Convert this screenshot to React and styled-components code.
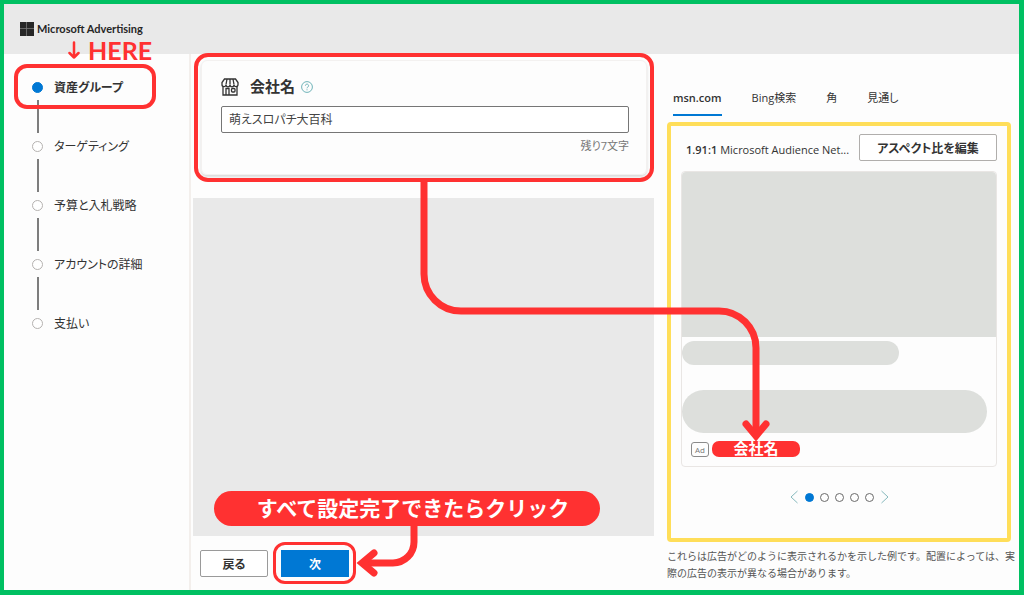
import React, { useState } from "react"
import styled, { createGlobalStyle } from "styled-components"

const red = "#ff3131"
const blue = "#0078d4"

const GlobalStyle = createGlobalStyle`
  *, *::before, *::after {
    box-sizing: border-box;
  }
  body {
    margin: 0;
    background: #fdfdfd;
    color: #333;
    font-family: "Open Sans", "Noto Sans CJK JP", sans-serif;
    font-size: 12px;
    font-feature-settings: "palt";
  }
  button, input {
    font: inherit;
    font-feature-settings: inherit;
    color: inherit;
  }
`

const Frame = styled.div`
  display: flex;
  flex-direction: column;
  min-height: 100vh;
  border: 4px solid #00c062;
  border-right-width: 5px;
  border-bottom-width: 5px;
`

const Header = styled.header`
  display: flex;
  align-items: center;
  gap: 3px;
  height: 50px;
  padding: 0 16px;
  background: #e9e9e9;
`

const Brand = styled.span`
  font-family: Lato, sans-serif;
  font-weight: 700;
  font-size: 11px;
  line-height: 16px;
  color: #262626;
`

const Columns = styled.div`
  flex: 1;
  display: grid;
  grid-template-columns: 187px minmax(0, 463fr) minmax(0, 365fr);
`

const Sidebar = styled.nav`
  position: relative;
  border-right: 2px solid #f3efec;
`

const Here = styled.div`
  position: absolute;
  top: -16px;
  left: 64px;
  display: flex;
  align-items: center;
  gap: 8px;
  color: ${red};
  font-family: Lato, sans-serif;
  font-weight: 700;
  font-size: 25px;
  line-height: 24px;
`

const Steps = styled.ol`
  list-style: none;
  margin: 0;
  padding: 27px 0 0 28px;
`

const Step = styled.li`
  position: relative;
  height: 59px;
  &:not(:last-child)::after {
    content: "";
    display: block;
    width: 2px;
    height: 33px;
    margin: 7px 0 0 5px;
    background: #7d7d7d;
  }
`

const StepLink = styled.a`
  display: flex;
  align-items: center;
  gap: 11px;
  height: 12px;
  color: #333;
  font-weight: ${p => (p.$active ? 700 : 400)};
  text-decoration: none;
  white-space: nowrap;
  &::before {
    content: "";
    width: 11px;
    height: 11px;
    border-radius: 50%;
    border: 1px solid ${p => (p.$active ? blue : "#b5b2b0")};
    background: ${p => (p.$active ? blue : "#fff")};
  }
`

const Highlight = styled.span`
  position: absolute;
  inset: ${p => p.$inset};
  border: ${p => p.$width || 4}px solid ${red};
  border-radius: ${p => p.$radius}px;
  pointer-events: none;
`

const Main = styled.main`
  display: flex;
  flex-direction: column;
`

const NameCard = styled.section`
  position: relative;
  margin: 6px 7px 23px 10px;
  padding: 16px 17px 18px 19px;
  border: 1px solid #f3f1f0;
  border-radius: 6px;
  box-shadow: 0 2px 3px rgba(0, 0, 0, 0.14);
`

const NameTitle = styled.div`
  display: flex;
  align-items: center;
  height: 20px;
  margin-bottom: 9px;
  label {
    margin: 0 6px 0 11px;
    padding-bottom: 4px;
    font-weight: 700;
    font-size: 15px;
  }
`

const NameInput = styled.input`
  display: block;
  width: 100%;
  height: 27px;
  padding: 0 7px 2px;
  border: 1px solid #767676;
  border-radius: 2px;
  background: #fff;
  color: #444;
`

const Remaining = styled.div`
  margin-top: 4px;
  margin-bottom: 1px;
  text-align: right;
  font-size: 11px;
  line-height: 18px;
  color: #777;
`

const HelpButton = styled.button`
  display: flex;
  padding: 0;
  border: 0;
  background: none;
`

const Connector = styled.svg`
  position: absolute;
  left: 50%;
  top: 100%;
  margin: 7px 0 0 -4px;
  overflow: visible;
  pointer-events: none;
  z-index: 2;
  fill: none;
  stroke: ${red};
  stroke-width: 7;
`

const Blank = styled.div`
  flex: 1;
  display: flex;
  align-items: flex-end;
  min-height: 200px;
  margin-left: 2px;
  padding: 0 54px 10px 21px;
  background: #e9e9e9;
`

const ClickNote = styled.div`
  flex: 1;
  height: 35px;
  padding-left: 12px;
  border-radius: 18px;
  background: ${red};
  color: #fff;
  font-family: "Noto Sans CJK JP", sans-serif;
  font-feature-settings: normal;
  font-weight: 700;
  font-size: 21px;
  line-height: 33px;
  text-align: center;
  white-space: nowrap;
`

const Footer = styled.footer`
  position: relative;
  display: flex;
  gap: 13px;
  padding: 14px 9px 13px;
`

const ButtonSlot = styled.div`
  position: relative;
`

const FooterButton = styled.button`
  display: block;
  width: 68px;
  height: 27px;
  padding: 0;
  border: 1px solid ${p => (p.$primary ? blue : "#9a9a9a")};
  border-radius: ${p => (p.$primary ? 0 : 2)}px;
  background: ${p => (p.$primary ? blue : "#fff")};
  color: ${p => (p.$primary ? "#fff" : "#333")};
  font-weight: 700;
`

const ClickArrow = styled(Connector)`
  left: 100%;
  top: 0;
  margin: -24px 0 0 8px;
`

const Preview = styled.aside`
  padding: 32px 1px 0 13px;
`

const Tabs = styled.div`
  display: flex;
  gap: 30px;
  margin: 0 0 6px 6px;
`

const Tab = styled.button`
  height: 30px;
  padding: 0 0 6px;
  border: 0;
  border-bottom: 2px solid ${p => (p.$active ? blue : "transparent")};
  background: none;
  font-size: 11px;
  font-weight: ${p => (p.$active ? 600 : 400)};
`

const PreviewBox = styled.section`
  height: 420px;
  margin-right: 7px;
  padding: 8px 10px;
  border: 4px solid #ffde59;
  border-radius: 4px;
`

const RatioRow = styled.div`
  display: flex;
  align-items: center;
  gap: 3px;
  margin-bottom: 10px;
  padding-left: 5px;
  font-size: 11px;
  white-space: nowrap;
  b {
    font-weight: 600;
  }
  b, span {
    padding-top: 4px;
  }
  button {
    width: 138px;
    height: 27px;
    margin-left: auto;
    padding: 0;
    border: 1px solid #b0aeac;
    border-radius: 2px;
    background: #fff;
    font-size: 12px;
    font-weight: 700;
  }
`

const AdCard = styled.article`
  height: 296px;
  border: 1px solid #e9e6e4;
  border-radius: 4px;
`

const Shape = styled.div`
  width: ${p => p.$width};
  height: ${p => p.$height}px;
  margin-bottom: ${p => p.$gap}px;
  border-radius: ${p => p.$radius};
  background: #dddfdc;
`

const AdLine = styled.div`
  display: flex;
  align-items: center;
  gap: 3px;
  padding-left: 9px;
`

const AdTag = styled.span`
  width: 18px;
  border: 1px solid #8a8a8a;
  border-radius: 3px;
  color: #777;
  font-size: 8px;
  line-height: 13px;
  text-align: center;
`

const CompanyPill = styled.span`
  width: 88px;
  height: 16px;
  border-radius: 7px;
  background: ${red};
  color: #fff;
  font-family: "Noto Sans CJK JP", sans-serif;
  font-weight: 700;
  font-size: 15px;
  line-height: 14px;
  text-align: center;
`

const Pager = styled.div`
  display: flex;
  align-items: center;
  justify-content: center;
  gap: 6px;
  margin-top: 23px;
`

const Arrow = styled.button`
  display: flex;
  padding: 0 1px;
  border: 0;
  background: none;
  svg {
    fill: none;
    stroke: #86b9bd;
  }
`

const Dot = styled.button`
  width: 9px;
  height: 9px;
  padding: 0;
  border: 1px solid ${p => (p.$active ? blue : "#6a6a6a")};
  border-radius: 50%;
  background: ${p => (p.$active ? blue : "#fff")};
`

const Note = styled.p`
  margin: 5px 0 0;
  color: #555;
  font-family: "Noto Sans CJK JP", sans-serif;
  font-feature-settings: normal;
  font-size: 10px;
  line-height: 17px;
`

const steps = ["資産グループ", "ターゲティング", "予算と入札戦略", "アカウントの詳細", "支払い"]
const tabs = ["msn.com", "Bing検索", "角", "見通し"]

function Logo() {
  return (
    <svg width="14" height="14" viewBox="0 0 14 14" fill="#262626" aria-hidden="true">
      <rect width="14" height="14" />
      <path d="M6.5 0v14M0 6.5h14" stroke="#777" strokeWidth="0.8" />
    </svg>
  )
}

function StoreIcon() {
  return (
    <svg width="18" height="18" viewBox="0 0 18 18" fill="none" stroke="#333" strokeWidth="1.3" aria-hidden="true">
      <path d="M3.500 1h11L17 4.500v2a2 2 0 0 1-4 .3 2 2 0 0 1-4 0 2 2 0 0 1-4 0 2 2 0 0 1-4-.3v-2z" />
      <path d="M6 1L5 6.500M9 1v5.500M12 1l1 5.500" />
      <path d="M2 8.500V17h14V8.500M5 17v-6.500h3V17" />
      <rect x="10.500" y="10.500" width="3.500" height="3.500" rx="1" />
    </svg>
  )
}

function HelpIcon() {
  return (
    <svg width="12" height="12" viewBox="0 0 12 12" fill="none" stroke="#6fb3b8" aria-hidden="true">
      <circle cx="6" cy="6" r="5.400" />
      <path d="M4.400 4.700a1.600 1.600 0 1 1 2.500 1.300c-.6.400-.9.700-.9 1.300M6 8.300v1" />
    </svg>
  )
}

export default function App() {
  const [name, setName] = useState("萌えスロパチ大百科")
  const [tab, setTab] = useState(0)
  const [slide, setSlide] = useState(0)

  return (
    <Frame>
      <GlobalStyle />
      <Header>
        <Logo />
        <Brand>Microsoft Advertising</Brand>
      </Header>
      <Columns>
        <Sidebar>
          <Here>
            <svg width="12" height="18" viewBox="0 0 12 18" fill="none" stroke={red} strokeWidth="2.500" strokeLinecap="round" strokeLinejoin="round" aria-hidden="true">
              <path d="M6 1.500v15M1.500 12L6 16.500l4.500-4.500" />
            </svg>
            HERE
          </Here>
          <Steps>
            {steps.map((label, i) => (
              <Step key={label}>
                <StepLink href="#" $active={i === 0}>{label}</StepLink>
                {i === 0 && <Highlight $inset="-17px 33px 31px -18px" $radius={13} />}
              </Step>
            ))}
          </Steps>
        </Sidebar>

        <Main>
          <NameCard>
            <NameTitle>
              <StoreIcon />
              <label htmlFor="company">会社名</label>
              <HelpButton aria-label="ヘルプ"><HelpIcon /></HelpButton>
            </NameTitle>
            <NameInput id="company" value={name} onChange={e => setName(e.target.value)} />
            <Remaining>残り7文字</Remaining>
            <Highlight $inset="-8px" $radius={14} />
            <Connector width="344" height="260" viewBox="0 0 344 260" aria-hidden="true">
              <path d="M4 0V93A37 37 0 0 0 41 130H299A37 37 0 0 1 336 167V254" />
              <path d="M326 243L336 255L346 243" strokeLinecap="round" />
            </Connector>
          </NameCard>
          <Blank>
            <ClickNote>すべて設定完了できたらクリック</ClickNote>
          </Blank>
          <Footer>
            <FooterButton>戻る</FooterButton>
            <ButtonSlot>
              <FooterButton $primary>次</FooterButton>
              <Highlight $inset="-8px -7px -7px -8px" $radius={12} $width={3} />
              <ClickArrow width="64" height="50" viewBox="0 0 64 50" aria-hidden="true">
                <path d="M57 0V16A21 21 0 0 1 36 37H6" />
                <path d="M17 27L5 37L17 47" strokeLinecap="round" />
              </ClickArrow>
            </ButtonSlot>
          </Footer>
        </Main>

        <Preview>
          <Tabs role="tablist">
            {tabs.map((t, i) => (
              <Tab key={t} role="tab" aria-selected={i === tab} $active={i === tab} onClick={() => setTab(i)}>{t}</Tab>
            ))}
          </Tabs>
          <PreviewBox>
            <RatioRow>
              <b>1.91:1</b>
              <span>Microsoft Audience Net...</span>
              <button>アスペクト比を編集</button>
            </RatioRow>
            <AdCard>
              <Shape $width="100%" $height={165} $gap={4} $radius="4px 4px 0 0" />
              <Shape $width="69%" $height={24} $gap={25} $radius="12px" />
              <Shape $width="97%" $height={43} $gap={8} $radius="22px" />
              <AdLine>
                <AdTag>Ad</AdTag>
                <CompanyPill>会社名</CompanyPill>
              </AdLine>
            </AdCard>
            <Pager>
              <Arrow aria-label="前へ" onClick={() => setSlide(Math.max(0, slide - 1))}>
                <svg width="8" height="14" viewBox="0 0 8 14"><path d="M7.500 1L1 7l6.500 6" /></svg>
              </Arrow>
              {[0, 1, 2, 3, 4].map(i => (
                <Dot key={i} aria-label={`${i + 1}`} $active={i === slide} onClick={() => setSlide(i)} />
              ))}
              <Arrow aria-label="次へ" onClick={() => setSlide(Math.min(4, slide + 1))}>
                <svg width="8" height="14" viewBox="0 0 8 14"><path d="M.5 1L7 7L.5 13" /></svg>
              </Arrow>
            </Pager>
          </PreviewBox>
          <Note>
            これらは広告がどのように表示されるかを示した例です。配置によっては、実際の広告の表示が異なる場合があります。
          </Note>
        </Preview>
      </Columns>
    </Frame>
  )
}
